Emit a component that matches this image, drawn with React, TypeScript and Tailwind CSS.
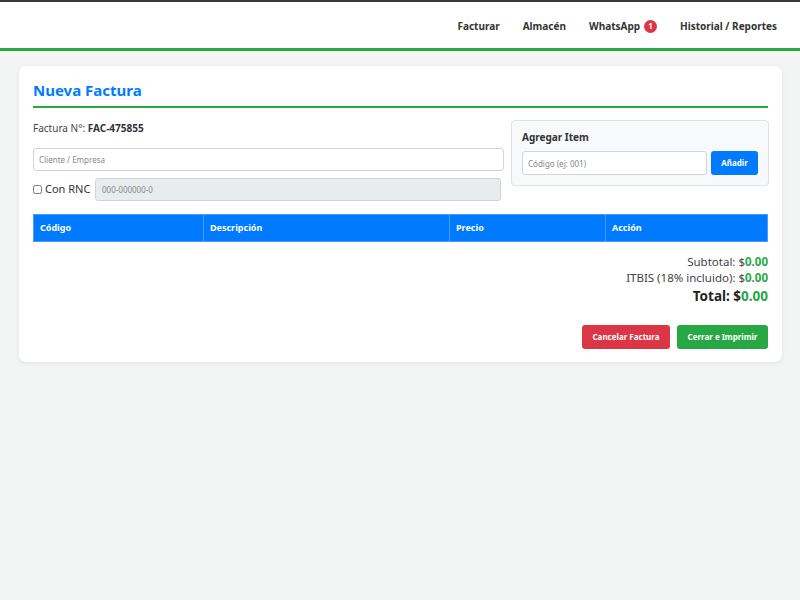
import React from 'react';

const font = { fontFamily: '"Noto Sans", "Open Sans", sans-serif' };

export default function App() {
  return (
    <div className="min-h-[600px] bg-[#f3f4f4] text-[#212529]" style={font}>
      <nav className="h-[51px] border-t-2 border-t-[#3a3a3a] border-b-[3px] border-b-[#28a745] bg-white flex items-center justify-end pr-[23px] pt-[2px]">
        <ul className="flex items-center gap-[23px] text-[10px] font-bold text-[#333]">
          <li>Facturar</li>
          <li>Almacén</li>
          <li className="flex items-center gap-[4px]">
            WhatsApp
            <span className="w-[13px] h-[13px] rounded-full bg-[#dc3545] text-white text-[8px] flex items-center justify-center">1</span>
          </li>
          <li>Historial / Reportes</li>
        </ul>
      </nav>

      <main className="pl-[19px] pr-[18px] pt-[15px]">
        <div className="bg-white rounded-[7px] shadow-[0_1px_4px_rgba(0,0,0,0.08)] px-[14px] pt-[12px] pb-[13px]">
          <h2 className="text-[15px] leading-[24px] font-bold text-[#007bff] pb-[4px] border-b-2 border-[#28a745]">Nueva Factura</h2>

          <div className="flex gap-[7px] mt-[13px]">
            <div className="flex-1">
              <p className="text-[10px] leading-[14px] text-[#444] h-[20px]">Factura N°: <b className="text-[#333]">FAC-475855</b></p>
              <input
                placeholder="Cliente / Empresa"
                className="mt-[7px] w-full h-[23px] border border-[#ced4da] rounded-[3px] px-[5px] text-[8px] outline-none placeholder:text-[#888]"
              />
              <div className="mt-[7px] flex items-center pr-[3px]">
                <label className="flex items-center gap-[3px] text-[11px] text-[#333] w-[62px]">
                  <input type="checkbox" className="w-[9px] h-[9px]" />
                  Con RNC
                </label>
                <input
                  disabled
                  placeholder="000-000000-0"
                  className="flex-1 h-[23px] bg-[#e9ecef] border border-[#ced4da] rounded-[3px] px-[6px] text-[8px] placeholder:text-[#888]"
                />
              </div>
            </div>
            <div className="w-[258px] h-[66px] bg-[#f8f9fa] border border-[#dee2e6] rounded-[4px] px-[10px] pt-[9px] -mr-[1px] -mt-[1px]">
              <h3 className="text-[10px] leading-[14px] font-bold text-[#333]">Agregar Item</h3>
              <div className="flex gap-[4px] mt-[7px]">
                <input
                  placeholder="Código (ej: 001)"
                  className="flex-1 h-[24px] bg-white border border-[#ced4da] rounded-[3px] px-[5px] text-[8px] placeholder:text-[#888]"
                />
                <button className="w-[47px] h-[24px] bg-[#007bff] text-white text-[8px] font-bold rounded-[3px]">Añadir</button>
              </div>
            </div>
          </div>

          <table className="w-full mt-[13px] border-collapse">
            <thead>
              <tr className="bg-[#007bff] text-white text-[9px] font-bold text-left h-[27px]">
                <th className="w-[170px] px-[6px] border border-[#4a9bff]">Código</th>
                <th className="w-[246px] px-[6px] border border-[#4a9bff]">Descripción</th>
                <th className="w-[156px] px-[6px] border border-[#4a9bff]">Precio</th>
                <th className="px-[6px] border border-[#4a9bff]">Acción</th>
              </tr>
            </thead>
            <tbody></tbody>
          </table>

          <div className="mt-[12px] flex flex-col items-end text-[11.5px] text-[#444] leading-[16px]">
            <p>Subtotal: $<span className="font-bold text-[#28a745]">0.00</span></p>
            <p>ITBIS (18% incluido): $<span className="font-bold text-[#28a745]">0.00</span></p>
            <p className="text-[13.5px] font-bold text-[#222] leading-[20px]">Total: $<span className="text-[#28a745]">0.00</span></p>
          </div>

          <div className="mt-[19px] flex justify-end gap-[7px]">
            <button className="w-[88px] h-[24px] bg-[#dc3545] text-white text-[8px] font-bold rounded-[3px]">Cancelar Factura</button>
            <button className="w-[91px] h-[24px] bg-[#28a745] text-white text-[8px] font-bold rounded-[3px]">Cerrar e Imprimir</button>
          </div>
        </div>
      </main>
    </div>
  );
}
